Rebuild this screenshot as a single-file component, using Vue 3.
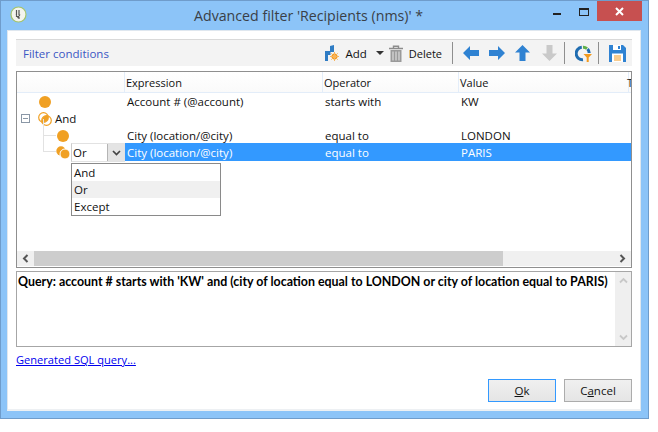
<template>
  <div class="window">
    <header class="titlebar">
      <svg class="app-icon" width="17" height="17" viewBox="0 0 17 17">
        <circle cx="8.500" cy="8.500" r="7.500" fill="#f4f4ee" stroke="#a5c46a" stroke-width="1.200" />
        <path d="M6.500 4v7M9 4v5M9 11v2M6 8.500l2 3 2-3" fill="none" stroke="#555" stroke-width="1.200" />
      </svg>
      <span class="title">Advanced filter 'Recipients (nms)' *</span>
      <div class="win-controls">
        <span class="min"></span>
        <span class="max"></span>
        <span class="close">
          <svg width="9" height="9" viewBox="0 0 9 9"><path d="M1 1l7 7M8 1l-7 7" stroke="#fff" stroke-width="2" /></svg>
        </span>
      </div>
    </header>

    <div class="client">
      <div class="toolbar">
        <span class="toolbar-title">Filter conditions</span>
        <div class="tools">
          <svg class="ico-add" width="14" height="17" viewBox="0 0 14 17">
            <path d="M5 1l4-1v7H5.500v3H3v6H0V6h5z" fill="#2f7cc4" />
            <circle cx="9.500" cy="11.500" r="3" fill="#f39a1e" />
            <path d="M9.500 7v9M5 11.500h9M6.300 8.300l6.400 6.400M12.700 8.300l-6.400 6.400" stroke="#f7b45c" stroke-width="1" />
          </svg>
          <span class="tool-label add">Add</span>
          <span class="caret"></span>
          <svg class="trash" width="14" height="17" viewBox="0 0 14 17">
            <path d="M0 3.500h14M4.500 3V1.200h5V3" fill="none" stroke="#8c8c8c" stroke-width="1.400" />
            <path d="M1.500 5h11v12h-11z" fill="#9a9a9a" />
            <path d="M4 6.500v9M7 6.500v9M10 6.500v9" stroke="#e2e2e2" stroke-width="1.100" />
          </svg>
          <span class="tool-label del">Delete</span>
          <span class="sep first"></span>
          <svg class="arrow left" width="16" height="14" viewBox="0 0 16 14"><path d="M0 7l7-7v4h9v6H7v4z" fill="#2f82d2" /></svg>
          <svg class="arrow right" width="16" height="14" viewBox="0 0 16 14"><path d="M16 7L9 0v4H0v6h9v4z" fill="#2f82d2" /></svg>
          <svg class="arrow up" width="15" height="16" viewBox="0 0 15 16"><path d="M7.500 0L15 7.500h-4.500V16h-6V7.500H0z" fill="#2f82d2" /></svg>
          <svg class="arrow down" width="15" height="16" viewBox="0 0 15 16"><path d="M7.500 16L15 8.500h-4.500V0h-6v8.500H0z" fill="#c9c9c9" /></svg>
          <span class="sep second"></span>
          <svg class="chart" width="17" height="17" viewBox="0 0 17 17">
            <path d="M6.800 2.300A6.200 6.200 0 0 0 8 14.700" fill="none" stroke="#1f6cb0" stroke-width="3" />
            <path d="M8 2.300a6.200 6.200 0 0 1 4 1.300" fill="none" stroke="#5fb04a" stroke-width="3" />
            <path d="M12.600 4a6.200 6.200 0 0 1 1.600 4" fill="none" stroke="#1f6cb0" stroke-width="3" />
            <path d="M8.500 9H17l-3.300 3.500V17h-2v-4.500z" fill="#f39a1e" />
          </svg>
          <span class="sep third"></span>
          <svg class="save" width="17" height="17" viewBox="0 0 17 17">
            <path d="M0 0h14l3 3v14H0z" fill="#2f82d2" />
            <path d="M4 0h8v5H4z" fill="#fff" />
            <path d="M9 1h2v3H9z" fill="#2f82d2" />
            <path d="M3 8.500h11V17H3z" fill="#fff" />
            <path d="M5 11h7M5 13h7M5 15h7" stroke="#f39a1e" stroke-width="1.200" />
          </svg>
        </div>
      </div>

      <div class="grid-box">
        <div class="grid-head">
          <span class="cell tree-col"></span>
          <span class="cell expr">Expression</span>
          <span class="cell op">Operator</span>
          <span class="cell val">Value</span>
          <span class="cell last">T</span>
        </div>
        <div class="grid-body">
          <div v-for="row in rows" :key="row.id" class="row" :class="{ selected: row.selected }">
            <div class="tree-cell" :style="{ paddingLeft: row.indent + 'px' }">
              <span v-if="row.toggle" class="toggle"></span>
              <span v-if="row.branch" class="branch"></span>
              <svg class="cond-icon" width="14" height="14" viewBox="0 0 14 14">
                <circle v-if="row.icon === 'dot'" cx="7" cy="7" r="6" fill="#f0a023" />
                <g v-if="row.icon === 'and'" fill="none" stroke="#f0a023" stroke-width="1.200">
                  <circle cx="5.500" cy="5.500" r="4.800" />
                  <circle cx="8.500" cy="8.500" r="4.800" />
                  <path d="M10 4A4.800 4.800 0 0 1 4 10 4.800 4.800 0 0 1 10 4z" fill="#f0a023" stroke="none" />
                </g>
                <g v-if="row.icon === 'or'">
                  <circle cx="5" cy="6" r="4.700" fill="#f0a023" />
                  <circle cx="9" cy="9" r="5" fill="#f0a023" stroke="#fff" stroke-width="1" />
                </g>
              </svg>
              <span v-if="row.label" class="tree-label">{{ row.label }}</span>
            </div>
            <span class="cell expr">{{ row.expr }}</span>
            <span class="cell op">{{ row.op }}</span>
            <span class="cell val">{{ row.val }}</span>
          </div>
        </div>

        <!-- combo editor and its open list sit over the tree -->
        <div class="combo">
          <span class="combo-text">Or</span>
          <span class="combo-btn">
            <svg width="9" height="6" viewBox="0 0 9 6"><path d="M1 1l3.500 3.500L8 1" fill="none" stroke="#444" stroke-width="1.700" /></svg>
          </span>
        </div>
        <ul class="dropdown">
          <li>And</li>
          <li class="hover">Or</li>
          <li>Except</li>
        </ul>

        <div class="hscroll">
          <span class="sb-btn">
            <svg width="7" height="9" viewBox="0 0 7 9"><path d="M5.500 1L2 4.500 5.500 8" fill="none" stroke="#555" stroke-width="2" /></svg>
          </span>
          <span class="sb-thumb"></span>
          <span class="sb-track"></span>
          <span class="sb-btn">
            <svg width="7" height="9" viewBox="0 0 7 9"><path d="M1.500 1L5 4.500 1.500 8" fill="none" stroke="#555" stroke-width="2" /></svg>
          </span>
        </div>
      </div>

      <div class="query-box">
        <div class="query-text">Query: account # starts with 'KW' and (city of location equal to LONDON or city of location equal to PARIS)</div>
        <div class="vscroll">
          <svg width="9" height="7" viewBox="0 0 9 7"><path d="M1 5.500l3.500-3.500L8 5.500" fill="none" stroke="#c8c8c8" stroke-width="1.800" /></svg>
          <svg width="9" height="7" viewBox="0 0 9 7"><path d="M1 1.500L4.500 5 8 1.500" fill="none" stroke="#c8c8c8" stroke-width="1.800" /></svg>
        </div>
      </div>

      <a class="sql-link" href="#">Generated SQL query...</a>

      <div class="buttons">
        <button class="btn primary"><u>O</u>k</button>
        <button class="btn">C<u>a</u>ncel</button>
      </div>
    </div>
  </div>
</template>

<script setup>
const rows = [
  { id: 1, indent: 21, icon: 'dot', expr: 'Account # (@account)', op: 'starts with', val: 'KW' },
  { id: 2, indent: 4, toggle: true, icon: 'and', label: 'And' },
  { id: 3, indent: 39, branch: true, icon: 'dot', expr: 'City (location/@city)', op: 'equal to', val: 'LONDON' },
  { id: 4, indent: 39, branch: true, icon: 'or', expr: 'City (location/@city)', op: 'equal to', val: 'PARIS', selected: true }
]
</script>

<style>
html,
body {
  background: #fff;
}
</style>

<style scoped>
.window {
  box-sizing: border-box;
  width: 649px;
  height: 419px;
  padding: 0 7px 7px 6px;
  display: flex;
  flex-direction: column;
  background: #8cc4f8;
  border: 1px solid #6f9ccb;
  font-family: "Open Sans", "Liberation Sans", sans-serif;
  font-size: 11.5px;
  color: #111;
}

.titlebar {
  flex: none;
  height: 29px;
  display: flex;
  align-items: center;
  position: relative;
}

.app-icon {
  margin: -2px 0 0 3px;
}

.title {
  margin-left: 167px;
  margin-top: -1px;
  font-size: 14.2px;
  color: #3a3f47;
}

.win-controls {
  position: absolute;
  top: 0;
  right: -1px;
  display: flex;
}

.min {
  position: absolute;
  right: 81px;
  top: 12px;
  width: 8px;
  height: 2px;
  background: #222;
}

.max {
  position: absolute;
  right: 53px;
  top: 7px;
  box-sizing: border-box;
  width: 10px;
  height: 8px;
  border: 1px solid #222;
  border-top-width: 2px;
}

.close {
  width: 45px;
  height: 20px;
  display: flex;
  align-items: center;
  justify-content: center;
  background: #c75050;
}

.client {
  flex: 1;
  min-height: 0;
  display: flex;
  flex-direction: column;
  padding: 8px 8px 0;
  background: #fff;
  border: 1px solid #dfe7ef;
  border-bottom: 2px solid #edf0f3;
}

.toolbar {
  flex: none;
  height: 27px;
  margin: 0 0 5px;
  display: flex;
  align-items: center;
  justify-content: space-between;
  background: #f3f3f3;
  border-top: 1px solid #d9d9d9;
  box-sizing: border-box;
}

.toolbar-title {
  margin-left: 7px;
  color: #3b57c4;
}

.tools {
  display: flex;
  align-items: center;
  margin-right: 6px;
}

.tool-label {
  margin-left: 6px;
  color: #111;
}

.tool-label.del {
  font-size: 11px;
}

.caret {
  width: 0;
  height: 0;
  margin: 0 5px 0 9px;
  border: 4px solid transparent;
  border-top: 4px solid #333;
  border-bottom: 0;
}

.sep {
  width: 1px;
  height: 22px;
  background: #8e8e8e;
}

.sep.first {
  margin: 0 10px;
}

.sep.second {
  margin: 0 10px 0 7px;
}

.sep.third {
  margin: 0 10px 0 6px;
}

.arrow.left,
.arrow.right {
  margin-right: 10px;
}

.arrow.up {
  margin-right: 12px;
}

.grid-box {
  flex: none;
  position: relative;
  height: 197px;
  box-sizing: border-box;
  border: 1px solid #8f8f8f;
  display: flex;
  flex-direction: column;
  overflow: hidden;
}

.grid-head {
  flex: none;
  height: 21px;
  display: flex;
  align-items: center;
  box-sizing: border-box;
  background: linear-gradient(#fff, #fafafa);
  border-bottom: 1px solid #e3edf9;
  font-size: 11px;
}

.grid-head .cell {
  height: 100%;
  display: flex;
  align-items: center;
  box-sizing: border-box;
  padding-left: 1px;
  border-left: 1px solid #e3edf9;
}

.grid-head .tree-col {
  width: 107px;
  flex: none;
  border-left: 0;
}

.grid-head .last {
  padding-left: 0;
  text-indent: -2px;
}

.expr {
  width: 198px;
  flex: none;
}

.op {
  width: 136px;
  flex: none;
}

.val {
  width: 170px;
  flex: none;
}

.last {
  flex: 1;
}

.grid-body {
  flex: 1;
  min-height: 0;
}

.row {
  height: 17px;
  display: flex;
  align-items: center;
}

.row.selected {
  height: 18px;
  margin-top: -1px;
}

.row .expr,
.row .op,
.row .val {
  box-sizing: border-box;
  padding-left: 3px;
}

.tree-cell {
  position: relative;
  box-sizing: border-box;
  width: 107px;
  flex: none;
  height: 100%;
  display: flex;
  align-items: center;
}

.selected {
  color: #fff;
}

.selected .expr,
.selected .op,
.selected .val {
  background: #3399ff;
  height: 100%;
  display: flex;
  align-items: center;
}

.selected .val {
  flex: 1;
}

.toggle {
  width: 9px;
  height: 9px;
  margin-right: 8px;
  box-sizing: border-box;
  border: 1px solid #8a97a6;
  background: linear-gradient(#8a97a6, #8a97a6) center / 5px 1px no-repeat;
}

.cond-icon {
  flex: none;
}

.tree-label {
  margin-left: 3px;
}

.branch {
  position: absolute;
  left: 26px;
  top: -8px;
  width: 12px;
  height: 16px;
  border-left: 1px solid #e2e2e2;
  border-bottom: 1px solid #e2e2e2;
}

.combo {
  position: absolute;
  left: 54px;
  top: 71px;
  width: 54px;
  height: 19px;
  box-sizing: border-box;
  display: flex;
  background: #fff;
  border: 1px solid #e2e2e2;
  border-left-color: #ccc;
}

.combo-text {
  flex: 1;
  padding-left: 1px;
  line-height: 17px;
}

.combo-btn {
  width: 16px;
  display: flex;
  align-items: center;
  justify-content: center;
  background: #e4e4e4;
  border-left: 1px solid #b5b5b5;
}

.dropdown {
  position: absolute;
  left: 54px;
  top: 91px;
  width: 150px;
  height: 53px;
  margin: 0;
  padding: 0;
  box-sizing: border-box;
  list-style: none;
  background: #fff;
  border: 1px solid #8a8a8a;
}

.dropdown li {
  height: 17px;
  line-height: 17px;
  padding-left: 2px;
}

.dropdown .hover {
  background: #f0f0f0;
}

.hscroll {
  flex: none;
  height: 15px;
  margin-bottom: 1px;
  display: flex;
  background: #f0f0f0;
}

.sb-btn {
  width: 17px;
  flex: none;
  display: flex;
  align-items: center;
  justify-content: center;
}

.sb-thumb {
  width: 469px;
  flex: none;
  background: #cdcdcd;
}

.sb-track {
  flex: 1;
}

.query-box {
  flex: none;
  height: 76px;
  margin-top: 3px;
  box-sizing: border-box;
  display: flex;
  border: 1px solid #a6a6a6;
}

.query-text {
  flex: 1;
  padding: 2px 0 0 1px;
  font-family: Lato, "Liberation Sans", sans-serif;
  font-weight: 700;
  font-size: 12.4px;
  color: #000;
  white-space: nowrap;
  overflow: hidden;
}

.vscroll {
  width: 16px;
  flex: none;
  display: flex;
  flex-direction: column;
  justify-content: space-between;
  align-items: center;
  padding: 5px 0;
  box-sizing: border-box;
  background: #efefef;
}

.sql-link {
  margin-top: 5px;
  align-self: flex-start;
  font-size: 11.1px;
  line-height: 16px;
  color: #0000ee;
  text-decoration: underline;
}

.buttons {
  margin-top: 11px;
  display: flex;
  justify-content: flex-end;
  gap: 8px;
}

.btn {
  width: 68px;
  height: 23px;
  padding: 0;
  box-sizing: border-box;
  font: inherit;
  color: #111;
  background: linear-gradient(#f0f0f0, #e5e5e5);
  border: 1px solid #acacac;
}

.btn.primary {
  border: 1px solid #3399ff;
}
</style>
